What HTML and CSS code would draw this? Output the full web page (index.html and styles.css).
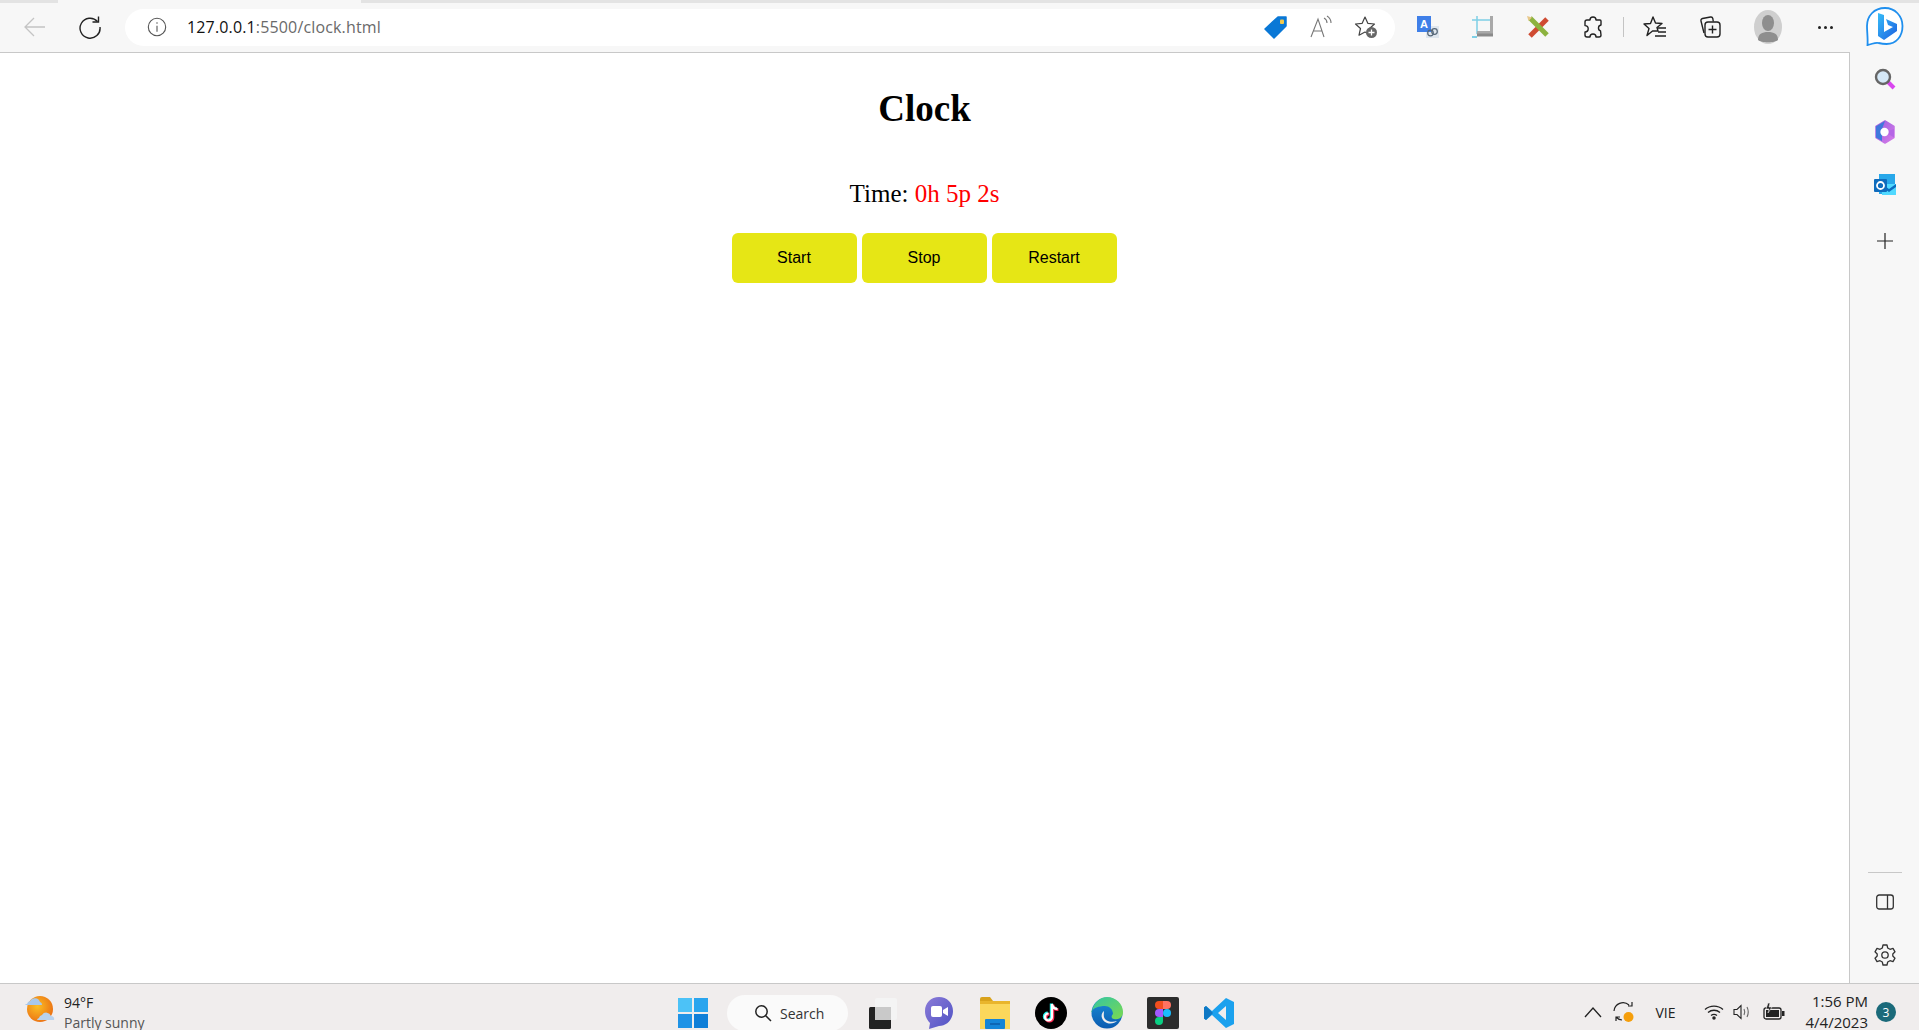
FILE: index.html
```html
<!DOCTYPE html>
<html lang="en">
<head>
<meta charset="utf-8">
<title>Clock</title>
<link rel="stylesheet" href="styles.css">
</head>
<body>
<div class="tabstrip"><span class="tab-a"></span><span class="tab-b"></span><span class="tab-c"></span></div>
<header class="toolbar">
  <span class="slot"><svg width="24" height="24" viewBox="0 0 24 24" fill="none" stroke="#c4c4c4" stroke-width="1.3"><path d="M22 12H2M11 3l-9 9 9 9"/></svg></span>
  <span class="slot"><svg width="24" height="24" viewBox="0 0 24 24" fill="none" stroke="#222" stroke-width="1.4"><path d="M19.5 6.5A10 10 0 1 0 22 12"/><path d="M14.5 7h6V1.5"/></svg></span>
  <div class="urlbar">
    <svg class="info" width="20" height="20" viewBox="0 0 20 20" fill="none" stroke="#555" stroke-width="1.1"><circle cx="10" cy="10" r="8.7"/><path d="M10 8.800v6M10 5.200v1.600"/></svg>
    <span class="url"><span class="host">127.0.0.1</span>:5500/clock.html</span>
    <span class="url-icons">
      <svg width="24" height="24" viewBox="0 0 24 24"><path d="M14 2h8v9L10 23 1 14z" fill="#0a78d6" stroke="#0a78d6" stroke-linejoin="round" stroke-width="1.5"/><rect x="16" y="4.500" width="4" height="4.500" rx="1" fill="#f2c94c"/></svg>
      <svg width="24" height="24" viewBox="0 0 24 24" fill="none" stroke="#777" stroke-width="1.1"><path d="M2 22 9 4l6 18M4.500 16h9"/><path d="M15 3c2 1 3 3 3 5M18 1c2.500 1.500 4 4 4 7"/></svg>
      <svg width="24" height="24" viewBox="0 0 24 24"><path d="M11 2l2.800 6.300 6.700.7-5 4.500 1.500 6.700L11 17l-6 3.200 1.500-6.700-5-4.500 6.700-.7z" fill="none" stroke="#444" stroke-width="1.200" stroke-linejoin="round"/><circle cx="17.500" cy="17.500" r="5.500" fill="#666"/><path d="M17.500 14.500v6M14.500 17.500h6" stroke="#fff" stroke-width="1.300"/></svg>
    </span>
  </div>
  <div class="tools">
    <span class="slot"><svg width="24" height="24" viewBox="0 0 24 24"><rect x="10" y="11" width="13" height="12" fill="#dfe6ee"/><rect x="1" y="1" width="14" height="16" fill="#3f7fe8"/><text x="8" y="13" class="glyph-a">A</text><circle cx="14.500" cy="18" r="2.800" fill="none" stroke="#567" stroke-width="1.200"/><circle cx="18.500" cy="16.500" r="2.800" fill="none" stroke="#567" stroke-width="1.200"/></svg></span>
    <span class="slot"><svg width="24" height="24" viewBox="0 0 24 24" fill="none"><path d="M1 5h18M6 1v18" stroke="#7fd0e6" stroke-width="1.500"/><path d="M6 19h16V1h-3v15H6z" fill="#a9a9a9"/><path d="M6 20h16" stroke="#8a8a8a" stroke-width="3"/><path d="M1 22h5" stroke="#7fd0e6" stroke-width="2"/></svg></span>
    <span class="slot"><svg width="24" height="24" viewBox="0 0 24 24" fill="none" stroke-linecap="butt"><path d="M21 4 4 21" stroke="#cf4b32" stroke-width="5"/><path d="M4 3l17 17" stroke="#8db33f" stroke-width="5"/><path d="M1 1l5 1.500L2.500 6z" fill="#e8c88a"/></svg></span>
    <span class="slot"><svg width="24" height="24" viewBox="0 0 24 24" fill="none" stroke="#222" stroke-width="1.400" stroke-linejoin="round"><path d="M9 5a3 3 0 0 1 6 0h4a1 1 0 0 1 1 1v4a3 3 0 0 0-.500 5.800L20 20a2 2 0 0 1-2 2h-3a3 3 0 0 0-6 0H6a2 2 0 0 1-2-2v-3a3.200 3.200 0 0 0 0-6.400V7a2 2 0 0 1 2-2z"/></svg></span>
    <span class="separator"></span>
    <span class="slot"><svg width="24" height="24" viewBox="0 0 24 24" fill="none" stroke="#222" stroke-width="1.400" stroke-linejoin="round"><path d="M10 2l2.500 6 6.500.5-5 4 1 3.500H9.500L4 20.500l2-7-5-4.500 6.500-.5z"/><path d="M15 13h8M15 17h8M12 21h11" stroke-width="1.600"/></svg></span>
    <span class="slot"><svg width="24" height="24" viewBox="0 0 24 24" fill="none" stroke="#222" stroke-width="1.400" stroke-linejoin="round"><path d="M6 18 3 6a2 2 0 0 1 1.500-2.500l8-1.500a2 2 0 0 1 2.300 1.500l.5 3"/><rect x="7" y="7" width="15" height="15" rx="3" fill="#f7f7f7"/><path d="M14.500 10.500v8M10.500 14.500h8"/></svg></span>
    <span class="slot avatar"><svg width="28" height="34" viewBox="0 0 28 34"><ellipse cx="14" cy="17" rx="14" ry="17" fill="#cfcfcf"/><ellipse cx="14" cy="13" rx="6" ry="8" fill="#8e8e8e"/><path d="M4 30c0-6 4-8 10-8s10 2 10 8c-3 3-17 3-20 0z" fill="#8e8e8e"/></svg></span>
    <span class="slot dots"><i></i><i></i><i></i></span>
    <span class="slot"><svg width="40" height="42" viewBox="0 0 40 42"><defs><linearGradient id="bing" x1="0" y1="0" x2="1" y2="1"><stop offset="0" stop-color="#37bdf8"/><stop offset="1" stop-color="#1c5fe0"/></linearGradient></defs><path d="M20 2C9 2 2 10 2 20c0 6 1 12 .500 19 5-1 8-3 11-2 3 .700 6 1 8 1 10 0 16-8 16-18S30 2 20 2z" fill="#fff" stroke="#1f8fee" stroke-width="1.800"/><path d="M13 7l6 2v17l9-5-5-2-2-6 11 5v7L19 34l-6-4z" fill="url(#bing)"/></svg></span>
  </div>
</header>
<div class="workspace">
  <main class="page">
    <h1 class="title">Clock</h1>
    <p class="time">Time: <span class="value">0h 5p 2s</span></p>
    <div class="actions"><button class="btn">Start</button> <button class="btn">Stop</button> <button class="btn">Restart</button></div>
  </main>
  <aside class="sidebar">
    <span class="side-slot"><svg width="24" height="24" viewBox="0 0 24 24" fill="none"><path d="M14 14l7 7" stroke="#d946ef" stroke-width="4"/><circle cx="10" cy="10" r="7" fill="#d5e8f7" stroke="#666" stroke-width="2.400"/></svg></span>
    <span class="side-slot"><svg width="24" height="24" viewBox="0 0 24 24"><defs><linearGradient id="cop" x1="0" y1="0" x2="1" y2="1"><stop offset="0" stop-color="#9a5fe0"/><stop offset="1" stop-color="#d77be8"/></linearGradient></defs><path d="M12 1l9 5.500v11L12 23l-9-5.500v-11z" fill="url(#cop)" stroke="url(#cop)" stroke-width="1.500" stroke-linejoin="round"/><path d="M12 1 3 6.500v11L9 21V9z" fill="#3f78dc"/><path d="M21 17.500V9l-9 3 z" fill="#b565e6"/><circle cx="11.500" cy="12" r="4.200" fill="#fff"/></svg></span>
    <span class="side-slot"><svg width="24" height="24" viewBox="0 0 24 24"><rect x="6" y="1" width="16" height="20" fill="#28a8ea"/><path d="M9 11h14v11H9z" fill="#50d9ff"/><path d="M9 11l7 5 7-5v3l-7 5-7-5z" fill="#0a6cc0"/><rect x="1" y="6" width="13" height="13" rx="1" fill="#0f6cbd"/><circle cx="7.500" cy="12.500" r="3.500" fill="none" stroke="#fff" stroke-width="1.800"/></svg></span>
    <span class="side-slot plus"><svg width="18" height="18" viewBox="0 0 18 18" stroke="#222" stroke-width="1.200"><path d="M9 1v16M1 9h16"/></svg></span>
    <span class="side-gap"></span>
    <span class="side-rule"></span>
    <span class="side-slot"><svg width="20" height="18" viewBox="0 0 20 18" fill="none" stroke="#333" stroke-width="1.300"><rect x="1.700" y="2" width="16.600" height="14" rx="2.500"/><path d="M12.500 2v14"/></svg></span>
    <span class="side-slot"><svg width="24" height="24" viewBox="0 0 24 24" fill="none" stroke="#333" stroke-width="1.300" stroke-linejoin="round"><path d="M10 2h4l.7 3 2.300 1.300 3-.9 2 3.400-2.200 2.200v2l2.200 2.200-2 3.400-3-.9-2.300 1.300-.7 3h-4l-.7-3L7 17.700l-3 .9-2-3.400L4.200 13v-2L2 8.800l2-3.400 3 .9L9.300 5z"/><circle cx="12" cy="12" r="3.200"/></svg></span>
  </aside>
</div>
<footer class="taskbar">
  <div class="weather">
    <svg width="32" height="32" viewBox="0 0 32 32"><defs><radialGradient id="sun" cx=".4" cy=".4" r=".7"><stop offset="0" stop-color="#fbbf24"/><stop offset="1" stop-color="#ea6a12"/></radialGradient></defs><circle cx="16" cy="16" r="13" fill="url(#sun)"/><path d="M3 11a4 4 0 0 1 3-3 5.500 5.500 0 0 1 10 1 3 3 0 0 1 2 3H1a2 2 0 0 1 2-1z" fill="#a9c8ea"/><path d="M15 25a4 4 0 0 1 3-3 5 5 0 0 1 9 1 3 3 0 0 1 3 4H13a2.500 2.500 0 0 1 2-2z" fill="#b8d2ee"/></svg>
    <div class="weather-text"><span class="temp">94°F</span><span class="cond">Partly sunny</span></div>
  </div>
  <div class="apps">
    <svg class="win" width="32" height="32" viewBox="0 0 32 32"><rect x="1" y="1" width="14" height="14" fill="#4cc2f7"/><rect x="17" y="1" width="14" height="14" fill="#2aa5ee"/><rect x="1" y="17" width="14" height="14" fill="#1f93e6"/><rect x="17" y="17" width="14" height="14" fill="#0f7fd8"/></svg>
    <div class="search"><svg width="18" height="18" viewBox="0 0 18 18" fill="none" stroke="#222" stroke-width="1.500"><circle cx="7.500" cy="7.500" r="5.700"/><path d="M11.500 11.500l5.500 5.500"/></svg><span>Search</span></div>
    <span class="app"><svg width="30" height="32" viewBox="0 0 30 32"><rect x="7" y="1" width="22" height="22" rx="2" fill="#f4f4f4"/><rect x="1" y="10" width="22" height="22" rx="1.500" fill="#222"/><rect x="7" y="10" width="16" height="13" fill="#c9c9c9"/></svg></span>
    <span class="app"><svg width="30" height="34" viewBox="0 0 30 34"><defs><linearGradient id="teams" x1="0" y1="0" x2="1" y2="1"><stop offset="0" stop-color="#8b7bd8"/><stop offset="1" stop-color="#4f52c4"/></linearGradient></defs><path d="M15 1c8 0 14 6 14 14s-6 15-14 15l-10 3 1-6C3 24 1 20 1 15 1 7 7 1 15 1z" fill="url(#teams)"/><rect x="7" y="10" width="11" height="11" rx="2" fill="#fff"/><path d="M19 14l5-3v9l-5-3z" fill="#fff"/></svg></span>
    <span class="app"><svg width="30" height="32" viewBox="0 0 30 32"><path d="M0 2a2 2 0 0 1 2-2h8l3 4h-13z" fill="#d9a21b"/><rect y="4" width="30" height="28" fill="#fbd75b"/><rect y="4" width="30" height="3" fill="#e9b52c"/><rect x="5" y="22" width="20" height="10" rx="1" fill="#1485d8"/><path d="M10 27h10" stroke="#0b5da8" stroke-width="1.500"/></svg></span>
    <span class="app"><svg width="32" height="32" viewBox="0 0 32 32"><circle cx="16" cy="16" r="16" fill="#000"/><path d="M17 7v13a3.500 3.500 0 1 1-3.500-3.500M17 7c.5 3 2.500 5 5.500 5" fill="none" stroke="#25f4ee" stroke-width="2.800" transform="translate(-.8 -.6)"/><path d="M17 7v13a3.500 3.500 0 1 1-3.500-3.500M17 7c.5 3 2.500 5 5.500 5" fill="none" stroke="#fe2c55" stroke-width="2.800" transform="translate(.9 .7)"/><path d="M17 7v13a3.500 3.500 0 1 1-3.500-3.500M17 7c.5 3 2.500 5 5.500 5" fill="none" stroke="#fff" stroke-width="2.200"/></svg></span>
    <span class="app"><svg width="32" height="32" viewBox="0 0 32 32"><defs><linearGradient id="edge1" x1="0" y1="0" x2="1" y2="1"><stop offset="0" stop-color="#32c5a5"/><stop offset="1" stop-color="#7bd94e"/></linearGradient><linearGradient id="edge2" x1="0" y1="0" x2="0" y2="1"><stop offset="0" stop-color="#1a8fd8"/><stop offset="1" stop-color="#0c5bb0"/></linearGradient></defs><circle cx="16" cy="16" r="15.500" fill="url(#edge2)"/><path d="M1 15C2 6 9 0 16 0c9 0 16 7 16 15 0 6-5 8-9 7-3-.7-3-3-1-5 0-5-4-8-8-8-6 0-12 2-14 6z" fill="url(#edge1)"/><path d="M13 14c-4 3-3 10 3 12 4 1.300 8 0 10-2-6 2-12 0-13-4-.5-2 0-4 0-6z" fill="#f0eded"/></svg></span>
    <span class="app"><svg width="32" height="32" viewBox="0 0 32 32"><rect width="32" height="32" rx="2" fill="#2c2c2c"/><path d="M16 4h-4a4 4 0 0 0 0 8h4z" fill="#f24e1e"/><path d="M16 4h4a4 4 0 0 1 0 8h-4z" fill="#ff7262"/><path d="M16 12h-4a4 4 0 0 0 0 8h4z" fill="#a259ff"/><circle cx="20" cy="16" r="4" fill="#1abcfe"/><path d="M12 20h4v4a4 4 0 1 1-4-4z" fill="#0acf83"/></svg></span>
    <span class="app"><svg width="32" height="32" viewBox="0 0 32 32"><path d="M23 1l8 4v22l-8 4L9 18l-6 5-2-1.500V10.500L3 9l6 5zM23 9l-8 7 8 7z" fill="#1ba1ee" fill-rule="evenodd"/><path d="M3 9l-2 1.500v11L3 23l7-7z" fill="#0f78c4"/></svg></span>
  </div>
  <div class="tray">
    <svg width="18" height="12" viewBox="0 0 18 12" fill="none" stroke="#222" stroke-width="1.300"><path d="M1 11l8-9 8 9"/></svg>
    <svg class="sync" width="22" height="24" viewBox="0 0 22 24"><path d="M1 11a9 9 0 0 1 15-6M19 2v4h-4M3 21v-4h4M3 17a9 9 0 0 0 6 3" fill="none" stroke="#222" stroke-width="1.200"/><circle cx="15.500" cy="17" r="5" fill="#f59e0b"/></svg>
    <span class="lang">VIE</span>
    <svg class="wifi" width="20" height="16" viewBox="0 0 20 16" fill="none" stroke="#222" stroke-width="1.300"><path d="M1 5.500c5-4.500 13-4.500 18 0M4 8.500c3.500-3 8.500-3 12 0M7 11.500c2-1.500 4-1.500 6 0"/><circle cx="10" cy="14" r="1.100" fill="#222"/></svg>
    <svg class="vol" width="20" height="16" viewBox="0 0 20 16" fill="none" stroke="#222" stroke-width="1.100"><path d="M1 5.500v5h3l4 4V1.500l-4 4z"/><path d="M11 5c1 2 1 4 0 6M14 3c1.500 3 1.500 7 0 10" stroke="#666"/></svg>
    <svg class="batt" width="22" height="20" viewBox="0 0 22 20"><rect x="1" y="6" width="17" height="11" rx="2" fill="none" stroke="#222" stroke-width="1.300"/><rect x="3" y="8" width="13" height="7" fill="#222"/><rect x="19" y="9" width="2.500" height="5" fill="#222"/><path d="M5 1l-2 6h3l-1 4 4-6H6l1-4z" fill="#222" stroke="#f0eded" stroke-width=".6"/></svg>
    <div class="clock"><span>1:56 PM</span><span>4/4/2023</span></div>
    <span class="badge">3</span>
  </div>
</footer>
</body>
</html>
```
FILE: styles.css
```css
* { box-sizing: border-box; }
html, body { margin: 0; height: 100%; overflow: hidden; }
body {
  display: flex;
  flex-direction: column;
  height: 1030px;
  background: #f7f7f7;
  font-family: "Open Sans", "Noto Sans", sans-serif;
  color: #000;
}
svg { display: block; flex: none; }

.tabstrip { display: flex; height: 3px; flex: none; }
.tab-a { width: 58px; background: #e3e3e3; }
.tab-b { width: 303px; background: #f7f7f7; }
.tab-c { flex: 1; background: #e3e3e3; }

.toolbar {
  display: flex;
  align-items: center;
  height: 49px;
  flex: none;
  padding-left: 7px;
  padding-bottom: 1px;
}
.slot {
  display: flex;
  align-items: center;
  justify-content: center;
  width: 55px;
  height: 44px;
  flex: none;
}
.urlbar {
  display: flex;
  align-items: center;
  width: 1270px;
  height: 37px;
  margin-left: 8px;
  padding: 0 17px 0 22px;
  background: #fff;
  border-radius: 19px;
  flex: none;
}
.url { margin-left: 20px; font-size: 16px; letter-spacing: .15px; color: #6a6a6a; }
.host { color: #111; }
.url-icons { display: flex; align-items: center; gap: 21px; margin-left: auto; }
.tools { display: flex; align-items: center; margin-left: 5px; }
.separator { width: 1px; height: 20px; background: #c4c4c4; margin: 0 3px 0 3px; }
.avatar { margin-left: 3px; }
.dots { gap: 3px; margin-left: 3px; }
.dots i { width: 3px; height: 3px; border-radius: 50%; background: #222; }
.tools .slot:last-child { width: 64px; }
.glyph-a { font: 700 11px "Liberation Sans", sans-serif; fill: #fff; text-anchor: middle; }

.workspace { display: flex; flex: 1; min-height: 0; }
.page {
  flex: 1;
  background: #fff;
  border-top: 1px solid #c8c8c8;
  border-right: 1px solid #c8c8c8;
  text-align: center;
  font-family: "Liberation Serif", "Times New Roman", serif;
}
.title { margin: 35px 0 0; font-size: 37px; line-height: 42px; font-weight: 700; }
.time { margin: 49px 0 0; font-size: 25px; line-height: 29px; }
.value { color: #f00; }
.actions { margin-top: 25px; font-size: 16px; }
.btn {
  width: 125px;
  height: 50px;
  padding: 0;
  border: 0;
  border-radius: 6px;
  background: #e6e615;
  color: #000;
  font: 16px "Liberation Sans", Arial, sans-serif;
  margin-right: 1px;
}
.sidebar {
  display: flex;
  flex-direction: column;
  align-items: center;
  width: 69px;
  flex: none;
  padding-bottom: 2px;
}
.side-slot { display: flex; align-items: center; justify-content: center; width: 40px; height: 53px; flex: none; }
.plus { margin-top: 3px; }
.side-gap { flex: 1; }
.side-rule { width: 34px; height: 1px; background: #c8c8c8; flex: none; margin-bottom: 2px; }

.taskbar {
  display: flex;
  align-items: center;
  height: 47px;
  flex: none;
  background: #f0eded;
  border-top: 1px solid #c8c8c8;
  font-size: 14px;
  color: #222;
  overflow: hidden;
}
.weather { display: flex; align-items: flex-start; gap: 8px; width: 677px; padding: 9px 0 0 24px; flex: none; height: 46px; }
.weather-text { display: flex; flex-direction: column; line-height: 20px; font-size: 14px; }
.cond { color: #555; }
.apps { display: flex; align-items: center; padding-top: 12px; }
.search {
  display: flex;
  align-items: center;
  gap: 8px;
  width: 121px;
  height: 36px;
  margin-left: 18px;
  padding-left: 27px;
  background: #fafafa;
  border-radius: 18px;
  font-size: 14px;
}
.search span { color: #333; }
.app { display: flex; align-items: center; justify-content: center; width: 56px; flex: none; }
.search + .app { margin-left: 7px; }
.tray { display: flex; align-items: center; margin-left: auto; padding-top: 10px; padding-right: 23px; }
.sync { margin-left: 11px; }
.lang { margin-left: 20px; font-size: 14px; }
.wifi { margin-left: 28px; }
.vol { margin-left: 9px; }
.batt { margin-left: 10px; }
.clock { display: flex; flex-direction: column; align-items: flex-end; margin-left: 21px; line-height: 21px; font-size: 15px; }
.badge {
  display: flex;
  align-items: center;
  justify-content: center;
  width: 20px;
  height: 20px;
  margin-left: 8px;
  border-radius: 50%;
  background: #1b6a7a;
  color: #fff;
  font-size: 12px;
}
```
